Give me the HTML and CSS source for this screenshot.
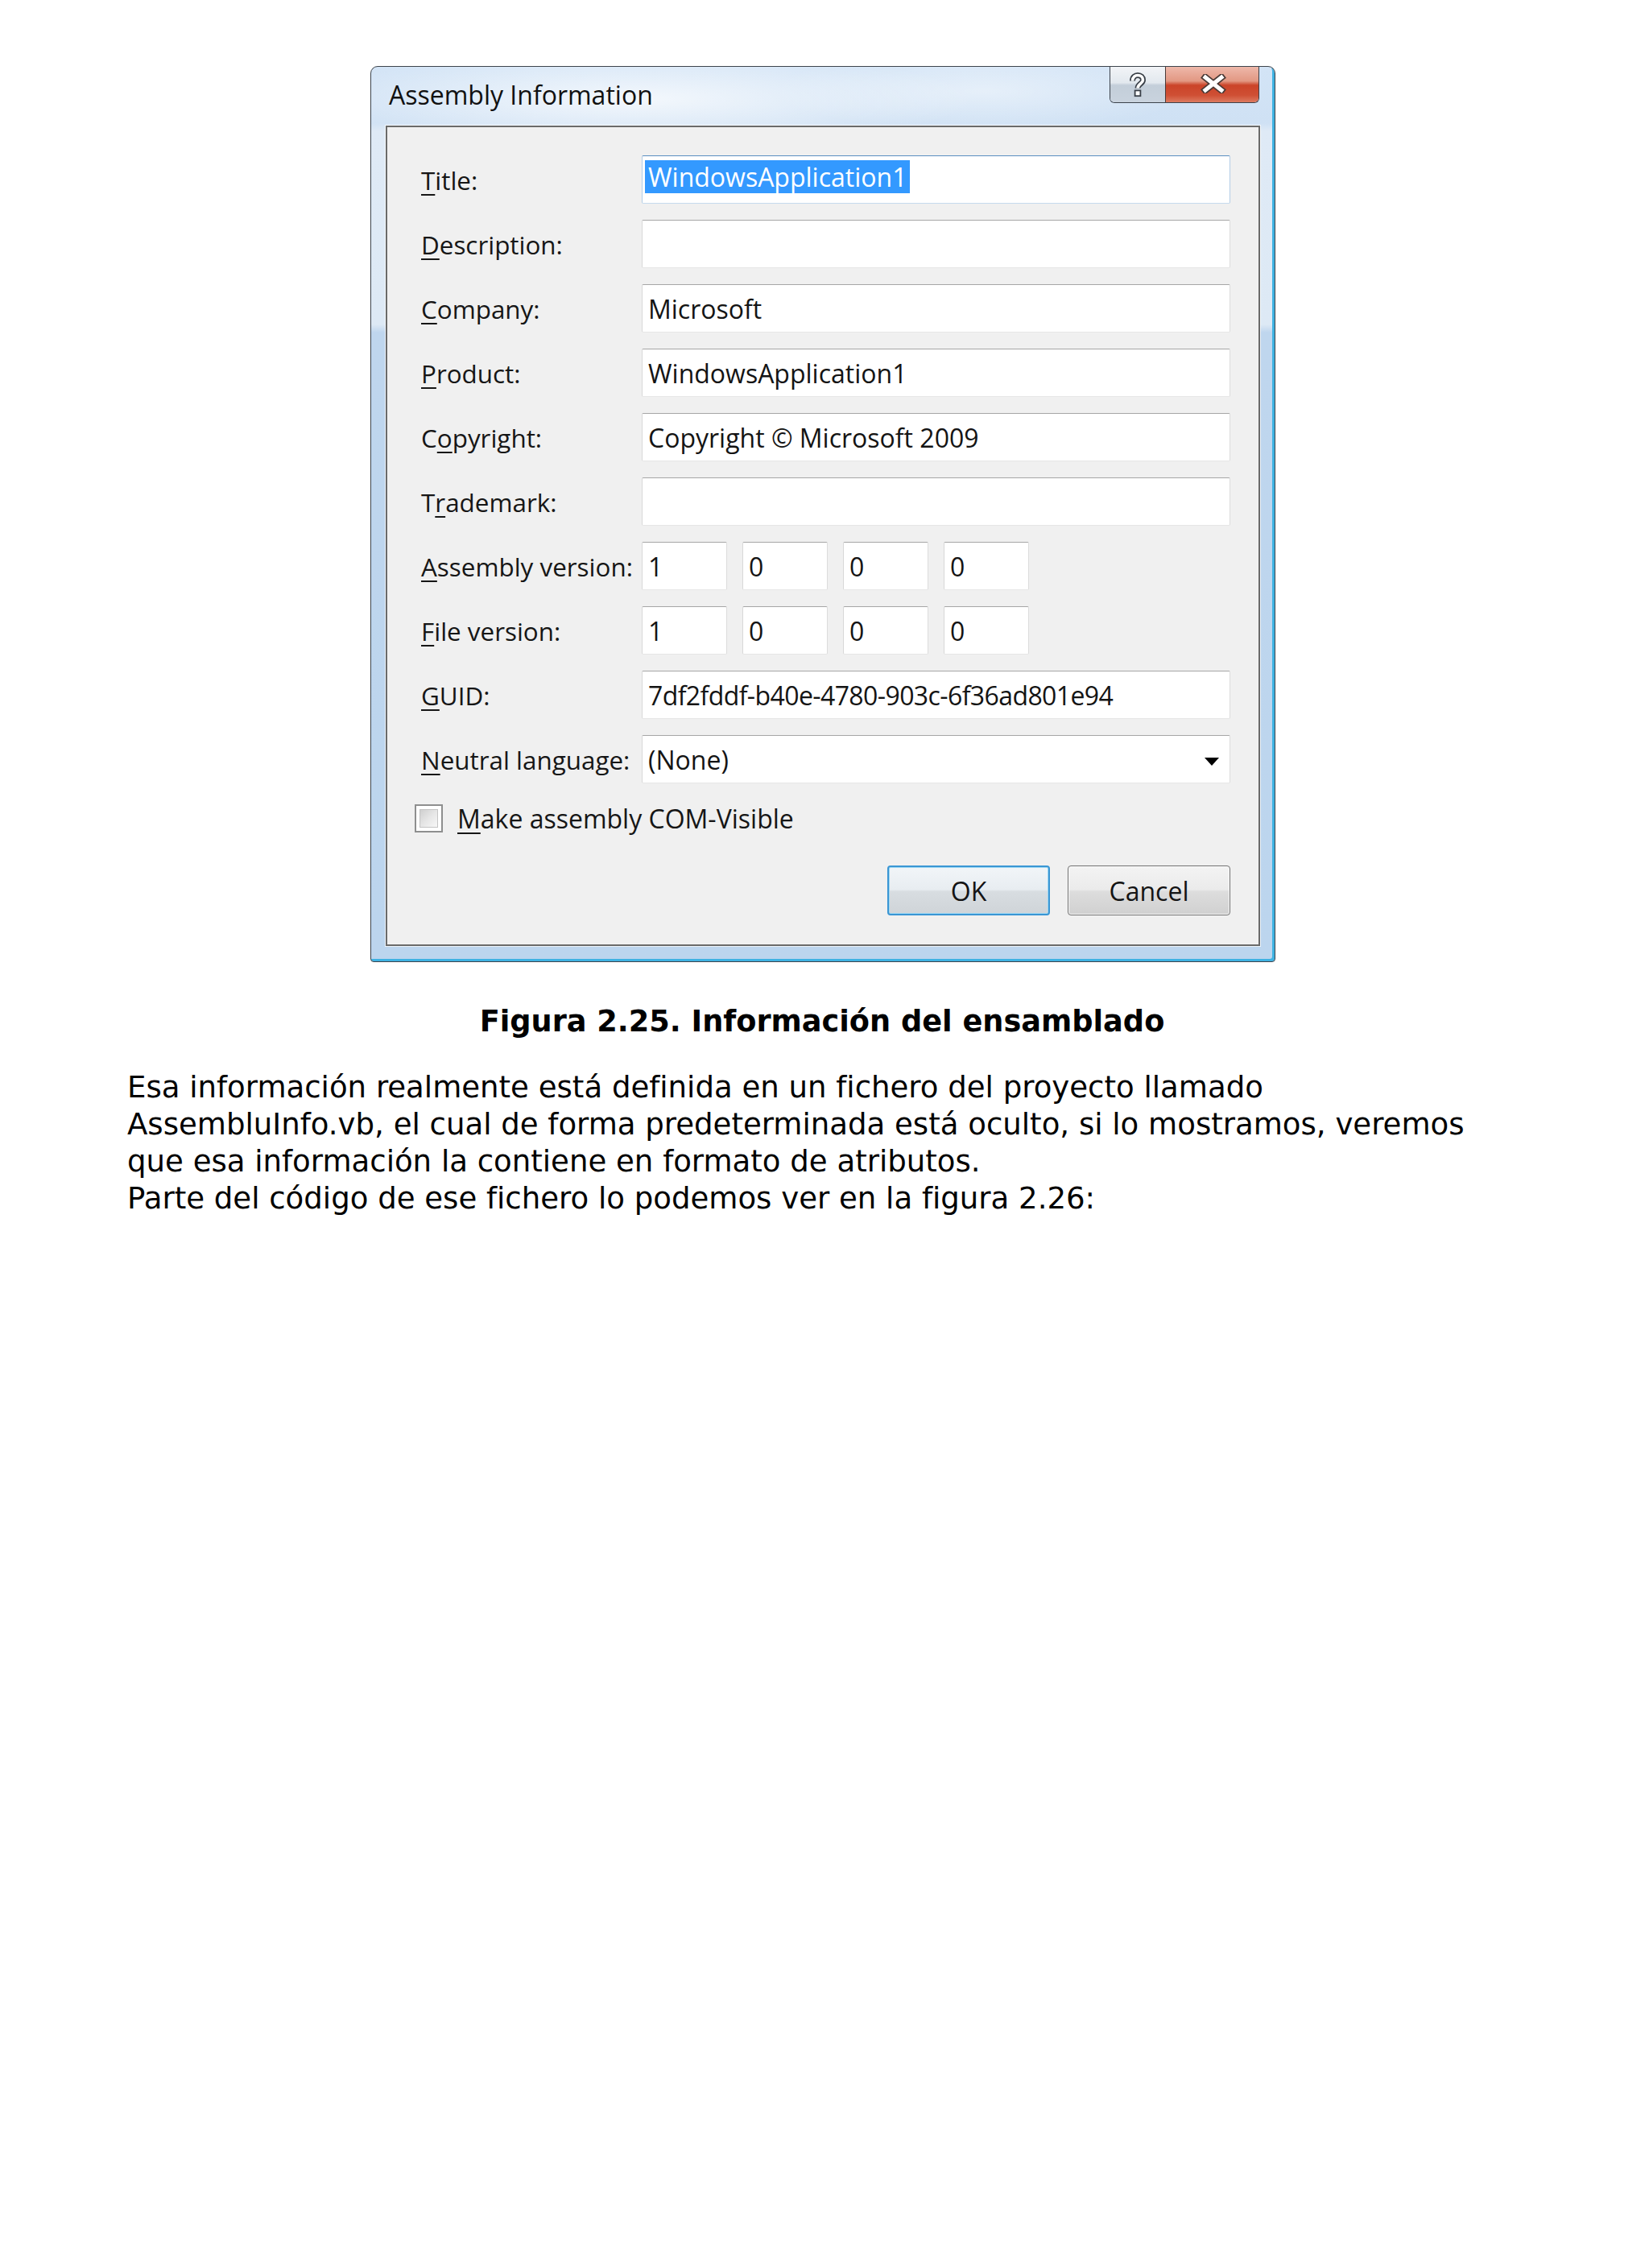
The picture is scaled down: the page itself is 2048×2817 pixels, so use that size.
FILE: index.html
```html
<!DOCTYPE html>
<html lang="es">
<head>
<meta charset="utf-8">
<title>Assembly Information</title>
<link rel="stylesheet" href="styles.css">
</head>
<body>
<div class="page">
  <div class="dialog">
    <div class="titlebar">
      <div class="title">Assembly Information</div>
      <div class="caption-btns">
        <div class="cbtn help">
          <svg width="24" height="32" viewBox="0 0 24 32">
            <path d="M5.5 10.5 C5.5 5.5 9 3.5 12 3.5 C16 3.5 18.5 5.8 18.5 9.5 C18.5 13.8 12 14.2 12 19.5" fill="none" stroke="#3a4048" stroke-width="7"/>
            <path d="M5.5 10.5 C5.5 5.5 9 3.5 12 3.5 C16 3.5 18.5 5.8 18.5 9.5 C18.5 13.8 12 14.2 12 19.5" fill="none" stroke="#ffffff" stroke-width="3.6"/>
            <rect x="8.6" y="22.4" width="6.8" height="6.8" fill="#ffffff" stroke="#3a4048" stroke-width="1.8"/>
          </svg>
        </div>
        <div class="cbtn close">
          <svg width="32" height="24" viewBox="0 0 32 24">
            <path d="M6 4 L26 20 M26 4 L6 20" stroke="#4b3a36" stroke-width="8.5" stroke-linecap="square"/>
            <path d="M6 4 L26 20 M26 4 L6 20" stroke="#ffffff" stroke-width="5" stroke-linecap="square"/>
          </svg>
        </div>
      </div>
    </div>
    <div class="panel">
      <div class="form">
        <div class="lbl"><u>T</u>itle:</div>
        <div class="tb focus"><span class="sel">WindowsApplication1</span></div>

        <div class="lbl"><u>D</u>escription:</div>
        <div class="tb"></div>

        <div class="lbl"><u>C</u>ompany:</div>
        <div class="tb">Microsoft</div>

        <div class="lbl"><u>P</u>roduct:</div>
        <div class="tb">WindowsApplication1</div>

        <div class="lbl">C<u>o</u>pyright:</div>
        <div class="tb">Copyright © Microsoft 2009</div>

        <div class="lbl">T<u>r</u>ademark:</div>
        <div class="tb"></div>

        <div class="lbl"><u>A</u>ssembly version:</div>
        <div class="ver">
          <div class="tb small">1</div>
          <div class="tb small">0</div>
          <div class="tb small">0</div>
          <div class="tb small">0</div>
        </div>

        <div class="lbl"><u>F</u>ile version:</div>
        <div class="ver">
          <div class="tb small">1</div>
          <div class="tb small">0</div>
          <div class="tb small">0</div>
          <div class="tb small">0</div>
        </div>

        <div class="lbl"><u>G</u>UID:</div>
        <div class="tb guid">7df2fddf-b40e-4780-903c-6f36ad801e94</div>

        <div class="lbl"><u>N</u>eutral language:</div>
        <div class="tb combo"><span>(None)</span><span class="arrow"></span></div>
      </div>

      <div class="check-row">
        <span class="cb"><span class="cb-inner"></span></span>
        <span><u>M</u>ake assembly COM-Visible</span>
      </div>

      <div class="btn-row">
        <div class="btn ok">OK</div>
        <div class="btn">Cancel</div>
      </div>
    </div>
  </div>

  <div class="text">
    <p class="caption">Figura 2.25. Información del ensamblado</p>
    <p class="body">Esa información realmente está definida en un fichero del proyecto llamado<br>AssembluInfo.vb, el cual de forma predeterminada está oculto, si lo mostramos, veremos<br>que esa información la contiene en formato de atributos.<br>Parte del código de ese fichero lo podemos ver en la figura 2.26:</p>
  </div>
</div>
</body>
</html>
```
FILE: styles.css
```css
html, body {
  margin: 0;
  padding: 0;
  background: #ffffff;
}

.page {
  padding-top: 82px;
}

/* ---------- dialog window ---------- */
.dialog {
  margin-left: 460px;
  width: 1124px;
  height: 1113px;
  box-sizing: border-box;
  border: 1px solid #3d444c;
  border-radius: 9px 9px 4px 4px;
  padding: 0 18px 19px 18px;
  display: flex;
  flex-direction: column;
  font-family: "Open Sans", "Noto Sans", sans-serif;
  font-size: 32px;
  color: #141414;
  background:
    radial-gradient(ellipse 420px 60px at 330px 40px, rgba(255,255,255,0.75), rgba(255,255,255,0) 100%),
    radial-gradient(ellipse 260px 50px at 760px 30px, rgba(255,255,255,0.45), rgba(255,255,255,0) 100%),
    linear-gradient(180deg, #d3e4f6 0px, #cfe1f4 70px, #dfeaf6 80px, #dde9f5 320px, #bfd6ee 330px, #bcd5ee 100%);
  box-shadow: inset -3px -3px 0 #3fb2e2;
}

.titlebar {
  height: 73px;
  flex: none;
  display: flex;
  justify-content: space-between;
  align-items: flex-start;
}

.title {
  margin: 15px 0 0 4px;
  line-height: 40px;
  color: #111111;
}

.caption-btns {
  display: flex;
  height: 45px;
  box-sizing: border-box;
  margin-right: 1px;
  border: 1px solid #3b424b;
  border-top: 0;
  border-radius: 0 0 6px 6px;
  overflow: hidden;
}

.cbtn {
  height: 100%;
  display: flex;
  align-items: center;
  justify-content: center;
}

.cbtn.help {
  width: 68px;
  background: linear-gradient(180deg, #f2f4f7 0%, #e2e8ee 45%, #c3ced9 52%, #c9d3de 100%);
}

.cbtn.help svg {
  margin-top: 1px;
}

.cbtn.close {
  width: 115px;
  border-left: 1px solid #4a3a38;
  background: linear-gradient(180deg, #eeb8aa 0%, #e29883 40%, #cb4429 52%, #cf4f34 80%, #dc7a60 100%);
}

.cbtn.close svg {
  margin: -3px 0 0 3px;
}

/* ---------- client panel ---------- */
.panel {
  flex: 1;
  box-sizing: border-box;
  border: 2px solid #6a6a6a;
  background: #f0f0f0;
  padding: 35px 35px 36px 42px;
  display: flex;
  flex-direction: column;
  box-shadow: 0 0 0 1px rgba(255,255,255,0.7);
}

.form {
  display: grid;
  grid-template-columns: 274px 731px;
  grid-auto-rows: 60px;
  row-gap: 20px;
}

.lbl {
  display: flex;
  align-items: center;
  white-space: nowrap;
  color: #161616;
  font-size: 31.4px;
}

u {
  text-decoration-thickness: 2px;
  text-underline-offset: 5px;
}

.tb {
  box-sizing: border-box;
  height: 60px;
  background: #ffffff;
  border: 1px solid;
  border-color: #a6a6a6 #dcdcdc #e6e6e6 #d8d8d8;
  border-radius: 2px;
  display: flex;
  align-items: center;
  padding-left: 7px;
  white-space: nowrap;
  color: #141414;
}

.tb.focus {
  border-color: #5a8ec0 #b3cde6 #c6dbee #b3cde6;
}

.tb.guid {
  letter-spacing: -0.6px;
}

.sel {
  display: inline-block;
  line-height: 41px;
  margin: 0 0 7px -4px;
  padding: 0 4px;
  background: #3399ff;
  color: #ffffff;
}

.ver {
  display: flex;
  gap: 19px;
}

.tb.small {
  width: 106px;
}

.combo .arrow {
  margin-left: auto;
  margin-right: 13px;
  margin-top: 6px;
  width: 0;
  height: 0;
  border-left: 9px solid transparent;
  border-right: 9px solid transparent;
  border-top: 10px solid #000000;
}

.check-row {
  display: flex;
  align-items: center;
  gap: 18px;
  height: 35px;
  margin: 26px 0 0 -8px;
  color: #161616;
}

.cb {
  box-sizing: border-box;
  width: 35px;
  height: 35px;
  border: 2px solid #8e8f8f;
  background: #ffffff;
  padding: 4px;
  display: flex;
}

.cb-inner {
  flex: 1;
  border: 1px solid #c4c4c4;
  background: linear-gradient(135deg, #cfcfcf 0%, #e6e6e6 50%, #f7f7f7 100%);
}

.btn-row {
  display: flex;
  justify-content: flex-end;
  gap: 22px;
  margin-top: 41px;
}

.btn {
  box-sizing: border-box;
  width: 202px;
  height: 62px;
  border: 1px solid #707070;
  border-radius: 4px;
  background: linear-gradient(180deg, #f3f3f3 0%, #ebebeb 48%, #dddddd 52%, #d0d0d0 100%);
  box-shadow: inset 0 0 0 1px #fbfbfb;
  display: flex;
  align-items: center;
  justify-content: center;
  color: #141414;
}

.btn.ok {
  border: 2px solid #3a96d4;
  box-shadow: inset 0 0 0 1px #9fd8f3;
  background: linear-gradient(180deg, #f1f5f8 0%, #e8edf1 48%, #d8dde1 52%, #cfd4d8 100%);
}

/* ---------- document text ---------- */
.text {
  margin: 51px 0 0 158px;
  width: 1726px;
  font-family: "DejaVu Sans", Verdana, sans-serif;
  font-size: 37.1px;
  line-height: 46px;
  color: #000000;
}

.caption {
  margin: 0;
  text-align: center;
  font-weight: bold;
  font-size: 36.7px;
}

.body {
  margin: 36px 0 0 0;
}
```
